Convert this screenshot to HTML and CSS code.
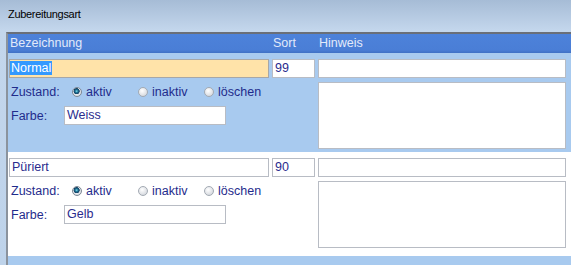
FILE: index.html
```html
<!DOCTYPE html>
<html lang="de">
<head>
    <meta charset="UTF-8">
    <title>Zubereitungsart</title>
    <link rel="stylesheet" href="styles.css">
</head>
<body>

    <div class="titlebar">Zubereitungsart</div>

    <div class="panel">
        <div class="head">
            <div>Bezeichnung</div>
            <div>Sort</div>
            <div>Hinweis</div>
        </div>

        <div class="row blue">
            <div class="field focus"><span class="sel">Normal</span></div>
            <div class="field">99</div>
            <div class="field"></div>
            <div class="props">
                <div class="line">
                    <span class="label">Zustand:</span>
                    <span class="opt"><span class="radio checked"></span>aktiv</span>
                    <span class="opt"><span class="radio"></span>inaktiv</span>
                    <span class="opt"><span class="radio"></span>löschen</span>
                </div>
                <div class="line">
                    <span class="label short">Farbe:</span>
                    <div class="field color">Weiss</div>
                </div>
            </div>
            <div class="field memo"></div>
        </div>

        <div class="row white">
            <div class="field">Püriert</div>
            <div class="field">90</div>
            <div class="field"></div>
            <div class="props">
                <div class="line">
                    <span class="label">Zustand:</span>
                    <span class="opt"><span class="radio checked"></span>aktiv</span>
                    <span class="opt"><span class="radio"></span>inaktiv</span>
                    <span class="opt"><span class="radio"></span>löschen</span>
                </div>
                <div class="line">
                    <span class="label short">Farbe:</span>
                    <div class="field color">Gelb</div>
                </div>
            </div>
            <div class="field memo"></div>
        </div>

        <div class="row blue end"></div>
    </div>

</body>
</html>
```
FILE: styles.css
```css
body {
    margin: 0;
    height: 265px;
    overflow: hidden;
    font-family: "Liberation Sans", Arial, sans-serif;
    font-size: 12.5px;
    background: linear-gradient(#a6bcd6, #c3d6ec 30px, #bed3ea);
}
.titlebar {
    height: 32px;
    line-height: 28px;
    padding-left: 8px;
    font-size: 11px;
    letter-spacing: -0.3px;
    color: #000;
}
.panel {
    margin-left: 6px;
    border-left: 2px solid #8b939d;
    border-top: 2px solid #6a6f78;
    background: #fff;
    height: 231px;
    overflow: hidden;
}
.head {
    display: grid;
    grid-template-columns: 260px 43px 248px;
    column-gap: 3px;
    height: 19px;
    line-height: 19px;
    padding-left: 1px;
    background: linear-gradient(#4d82da, #4a7ed6 16px, #3f70c4);
    color: #e2eafa;
}
.head div {
    padding-left: 1px;
}
.row {
    display: grid;
    grid-template-columns: 260px 43px 248px;
    grid-template-rows: 19px 67px;
    column-gap: 3px;
    row-gap: 4px;
    padding: 6px 0 3px 1px;
}
.blue {
    background: #a8caef;
}
.white {
    background: #fff;
    padding-bottom: 8px;
}
.end {
    grid-template-rows: 9px;
    padding: 0;
}
.field {
    box-sizing: border-box;
    height: 19px;
    border: 1px solid #b8bcc4;
    background: #fff;
    color: #2b2c8e;
    line-height: 17px;
    padding: 0 2px;
    white-space: nowrap;
    overflow: hidden;
}
.focus {
    background: #ffe3a9;
    border-color: #a7a7a7;
    padding-left: 0;
}
.sel {
    background: #3399ff;
    color: #fff;
    padding: 0 1px;
}
.memo {
    height: 67px;
}
.props {
    grid-column: 1 / 3;
}
.line {
    display: flex;
    align-items: center;
    height: 20px;
    color: #1f2c8c;
}
.line + .line {
    margin-top: 4px;
    height: 19px;
}
.label {
    width: 61px;
    padding-left: 2px;
}
.label.short {
    width: 53px;
}
.color {
    width: 162px;
}
.opt {
    display: inline-flex;
    align-items: center;
    gap: 4px;
    width: 66px;
}
.radio {
    box-sizing: border-box;
    width: 10px;
    height: 10px;
    border-radius: 50%;
    border: 1px solid #a3aab3;
    background: radial-gradient(circle at 40% 35%, #ffffff, #dadde2 70%, #c3c8cf);
}
.radio.checked {
    border-color: #7d8894;
    background: radial-gradient(circle at 45% 40%, #7ee0f0 0, #1d6f90 1.5px, #123e62 2.8px, #e6e9ee 3.3px, #c9ced5);
}
```
